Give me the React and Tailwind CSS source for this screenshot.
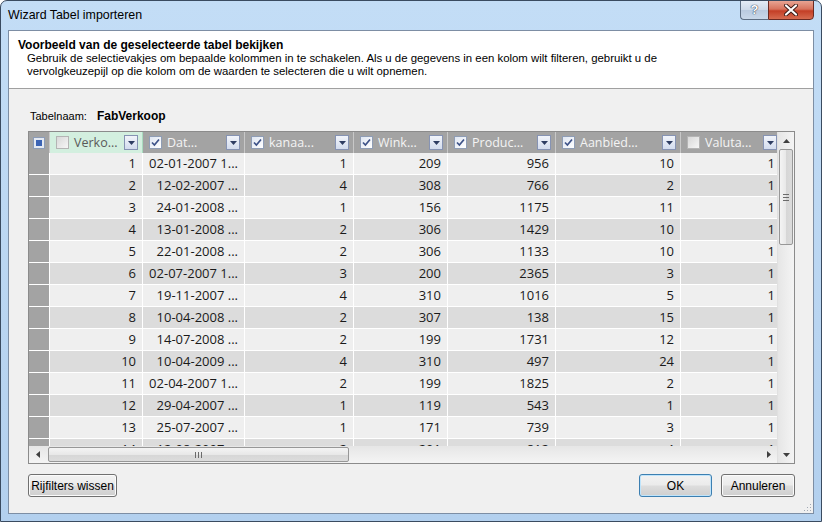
import React from 'react';

const cols = [
  { label: 'Verko...', w: 'w-[93px]', checked: false, active: true },
  { label: 'Dat...', w: 'w-[102px]', checked: true },
  { label: 'kanaa...', w: 'w-[109px]', checked: true },
  { label: 'Wink...', w: 'w-[94px]', checked: true },
  { label: 'Produc...', w: 'w-[108px]', checked: true },
  { label: 'Aanbied...', w: 'w-[125px]', checked: true },
  { label: 'Valuta...', w: 'w-[101px]', checked: false },
];

const rows = [
  ['1', '02-01-2007 1...', '1', '209', '956', '10', '1'],
  ['2', '12-02-2007 ...', '4', '308', '766', '2', '1'],
  ['3', '24-01-2008 ...', '1', '156', '1175', '11', '1'],
  ['4', '13-01-2008 ...', '2', '306', '1429', '10', '1'],
  ['5', '22-01-2008 ...', '2', '306', '1133', '10', '1'],
  ['6', '02-07-2007 1...', '3', '200', '2365', '3', '1'],
  ['7', '19-11-2007 ...', '4', '310', '1016', '5', '1'],
  ['8', '10-04-2008 ...', '2', '307', '138', '15', '1'],
  ['9', '14-07-2008 ...', '2', '199', '1731', '12', '1'],
  ['10', '10-04-2009 ...', '4', '310', '497', '24', '1'],
  ['11', '02-04-2007 1...', '2', '199', '1825', '2', '1'],
  ['12', '29-04-2007 ...', '1', '119', '543', '1', '1'],
  ['13', '25-07-2007 ...', '1', '171', '739', '3', '1'],
  ['14', '12-08-2007 ...', '2', '201', '812', '4', '1'],
];

function CheckBox({ checked }) {
  return (
    <span className={`w-[13px] h-[13px] shrink-0 border flex items-center justify-center ${checked ? 'border-[#8f9db5] bg-[linear-gradient(135deg,#dfe6f2,#ffffff)]' : 'border-[#b4b4b4] bg-[linear-gradient(135deg,#d8d8d8,#f6f6f6)]'}`}>
      {checked && (
        <svg width="9" height="9" viewBox="0 0 9 9">
          <path d="M1 4.5 L3.4 7 L8 1.5" stroke="#3d5288" strokeWidth="1.7" fill="none" />
        </svg>
      )}
    </span>
  );
}

function DropBtn() {
  return (
    <span className="w-[14px] h-[15px] shrink-0 border border-[#8693b3] bg-[linear-gradient(to_bottom,#f1f4fa,#d3dcee)] flex items-center justify-center">
      <svg width="7" height="4" viewBox="0 0 7 4">
        <path d="M0 0H7L3.5 4Z" fill="#2e3d62" />
      </svg>
    </span>
  );
}

function Btn({ children, w, primary }) {
  return (
    <div
      className={`${w} h-[23px] rounded-[3px] border flex items-center justify-center text-[12px] text-black ${
        primary
          ? 'border-[#3c7fb1] shadow-[inset_0_0_0_1px_#bfe4fb] bg-[linear-gradient(to_bottom,#f2f2f2,#ebebeb_48%,#dddddd_52%,#cfcfcf)]'
          : 'border-[#707070] shadow-[inset_0_0_0_1px_#fbfbfb] bg-[linear-gradient(to_bottom,#f2f2f2,#ebebeb_48%,#dddddd_52%,#cfcfcf)]'
      }`}
    >
      {children}
    </div>
  );
}

function Tri({ dir }) {
  const d = {
    up: 'M0 4L3.5 0L7 4Z',
    down: 'M0 0H7L3.5 4Z',
    left: 'M4 0V7L0 3.5Z',
    right: 'M0 0V7L4 3.5Z',
  }[dir];
  const vert = dir === 'up' || dir === 'down';
  return (
    <svg width={vert ? 7 : 4} height={vert ? 4 : 7} viewBox={vert ? '0 0 7 4' : '0 0 4 7'}>
      <path d={d} fill="#3f3f3f" />
    </svg>
  );
}

export default function App() {
  return (
    <div className="w-[822px] h-[522px] flex flex-col bg-[linear-gradient(to_bottom,#c3ddf6,#b3d0ee)] border border-[#3a4b60] rounded-t-[7px] overflow-hidden font-['Liberation_Sans',sans-serif] relative">
      {/* Title bar */}
      <div className="h-[29px] shrink-0 flex items-start">
        <div className="flex-1 pl-[7px] pt-[7px] text-[12.4px] leading-[15px] text-black">Wizard Tabel importeren</div>
        <div className="flex mr-[7px] -mt-px">
          <div className="w-[28px] h-[20px] rounded-bl-[4px] border border-[#5c6d82] border-r-0 bg-[linear-gradient(to_bottom,#e4ecf6,#cdd9e8_50%,#b9cadf_50%,#c9d8ea)] flex items-center justify-center text-[13px] font-bold text-white [text-shadow:0_0_1px_#1f2d44,0_0_1px_#1f2d44]">
            ?
          </div>
          <div className="w-[46px] h-[20px] rounded-br-[4px] border border-[#6b2a22] bg-[linear-gradient(to_bottom,#e8a493,#d7735d_45%,#c43f26_55%,#d66b50)] flex items-center justify-center">
            <svg width="14" height="12" viewBox="0 0 14 12">
              <path d="M2 1.5L12 10.5M12 1.5L2 10.5" stroke="#3b1a15" strokeWidth="4" strokeLinecap="round" />
              <path d="M2 1.5L12 10.5M12 1.5L2 10.5" stroke="#ffffff" strokeWidth="2.2" strokeLinecap="round" />
            </svg>
          </div>
        </div>
      </div>

      {/* Body with frame */}
      <div className="flex-1 min-h-0 flex px-[7px] pb-[7px]">
        <div className="flex-1 min-w-0 border border-[#7d8ea4] bg-[#f0f0f0] flex flex-col relative">
          {/* Header */}
          <div className="h-[58px] shrink-0 bg-white border-b border-[#a0a0a0] pl-[9px] pt-[7px]">
            <div className="text-[12px] leading-[14px] font-bold text-black">Voorbeeld van de geselecteerde tabel bekijken</div>
            <div className="pl-[9px] text-[11.4px] leading-[13px] text-black">
              Gebruik de selectievakjes om bepaalde kolommen in te schakelen. Als u de gegevens in een kolom wilt filteren, gebruikt u de
              <br />
              vervolgkeuzepijl op die kolom om de waarden te selecteren die u wilt opnemen.
            </div>
          </div>

          {/* Gray area */}
          <div className="flex-1 flex flex-col pl-[19px] pr-[18px]">
            <div className="mt-[20px] h-[14px] flex items-center text-[11px] text-black pl-[2px]">
              <span>Tabelnaam:</span>
              <span className="ml-[10px] font-bold text-[12px]">FabVerkoop</span>
            </div>

            {/* Grid */}
            <div className="mt-[8px] h-[333px] border border-[#8b8b8b] flex bg-[#f0f0f0] font-['Open_Sans',sans-serif]">
              <div className="flex-1 min-w-0 flex flex-col">
                {/* Header row */}
                <div className="h-[21px] shrink-0 flex overflow-hidden bg-[#a3a3a3]">
                  <div className="w-[21px] shrink-0 border-r border-[#c8c8c8] flex items-center justify-center">
                    <span className="w-[12px] h-[12px] border border-[#8c9cb8] bg-[#e4e9f2] flex items-center justify-center">
                      <span className="w-[6px] h-[6px] bg-[#3b63b5]" />
                    </span>
                  </div>
                  {cols.map((c, i) => (
                    <div
                      key={i}
                      className={`${c.w} shrink-0 flex items-center pl-[6px] pr-[4px] border-r ${
                        c.active ? 'bg-[#d3efdf] border-[#a9dbbf] text-[#5a5a5a]' : 'border-[#c8c8c8] text-[#f4f4f4]'
                      }`}
                    >
                      <CheckBox checked={c.checked} />
                      <span className="ml-[5px] flex-1 min-w-0 text-[12.5px] leading-[15px] whitespace-nowrap">{c.label}</span>
                      <DropBtn />
                    </div>
                  ))}
                </div>

                {/* Body */}
                <div className="flex-1 min-h-0 overflow-hidden">
                  {rows.map((r, ri) => (
                    <div key={ri} className={`h-[22px] flex border-b border-white ${ri % 2 === 0 ? 'bg-[#efefef]' : 'bg-[#dcdcdc]'}`}>
                      <div className="w-[21px] shrink-0 bg-[#a3a3a3] border-r border-white" />
                      {r.map((v, ci) => (
                        <div
                          key={ci}
                          className={`${cols[ci].w} shrink-0 border-r border-white flex items-center justify-end pr-[6px] text-[13px] text-[#1a1a1a] whitespace-nowrap`}
                        >
                          {v}
                        </div>
                      ))}
                    </div>
                  ))}
                </div>

                {/* Horizontal scrollbar */}
                <div className="h-[17px] shrink-0 flex items-stretch bg-[linear-gradient(to_bottom,#e6e6e6,#f4f4f4)]">
                  <div className="w-[17px] flex items-center justify-center">
                    <Tri dir="left" />
                  </div>
                  <div className="ml-[2px] my-[1px] w-[301px] rounded-[2px] border border-[#979797] bg-[linear-gradient(to_bottom,#f4f4f4,#e8e8e8_50%,#d6d6d6_50%,#dcdcdc)] flex items-center justify-center gap-[2px]">
                    <span className="w-px h-[6px] bg-[#6b6b6b]" />
                    <span className="w-px h-[6px] bg-[#6b6b6b]" />
                    <span className="w-px h-[6px] bg-[#6b6b6b]" />
                  </div>
                  <div className="flex-1" />
                  <div className="w-[17px] flex items-center justify-center">
                    <Tri dir="right" />
                  </div>
                </div>
              </div>

              {/* Vertical scrollbar */}
              <div className="w-[17px] shrink-0 flex flex-col bg-[linear-gradient(to_right,#e6e6e6,#f4f4f4)] border-l border-[#e0e0e0]">
                <div className="h-[17px] flex items-center justify-center">
                  <Tri dir="up" />
                </div>
                <div className="mx-[1px] h-[96px] rounded-[2px] border border-[#979797] bg-[linear-gradient(to_right,#f4f4f4,#e8e8e8_50%,#d6d6d6_50%,#dcdcdc)] flex flex-col items-center justify-center gap-[2px]">
                  <span className="w-[6px] h-px bg-[#6b6b6b]" />
                  <span className="w-[6px] h-px bg-[#6b6b6b]" />
                  <span className="w-[6px] h-px bg-[#6b6b6b]" />
                </div>
                <div className="flex-1" />
                <div className="h-[17px] flex items-center justify-center">
                  <Tri dir="down" />
                </div>
              </div>
            </div>

            {/* Buttons */}
            <div className="mt-[10px] flex items-center">
              <Btn w="w-[89px]">Rijfilters wissen</Btn>
              <div className="flex-1" />
              <Btn w="w-[73px]" primary>OK</Btn>
              <div className="w-[9px]" />
              <Btn w="w-[74px]">Annuleren</Btn>
            </div>
          </div>

          {/* resize grip */}
          <svg className="absolute right-[1px] bottom-[1px]" width="10" height="10" viewBox="0 0 10 10">
            <g fill="#a0a8b4">
              <rect x="8" y="2" width="1" height="1" />
              <rect x="5" y="5" width="1" height="1" />
              <rect x="8" y="5" width="1" height="1" />
              <rect x="2" y="8" width="1" height="1" />
              <rect x="5" y="8" width="1" height="1" />
              <rect x="8" y="8" width="1" height="1" />
            </g>
          </svg>
        </div>
      </div>
    </div>
  );
}
